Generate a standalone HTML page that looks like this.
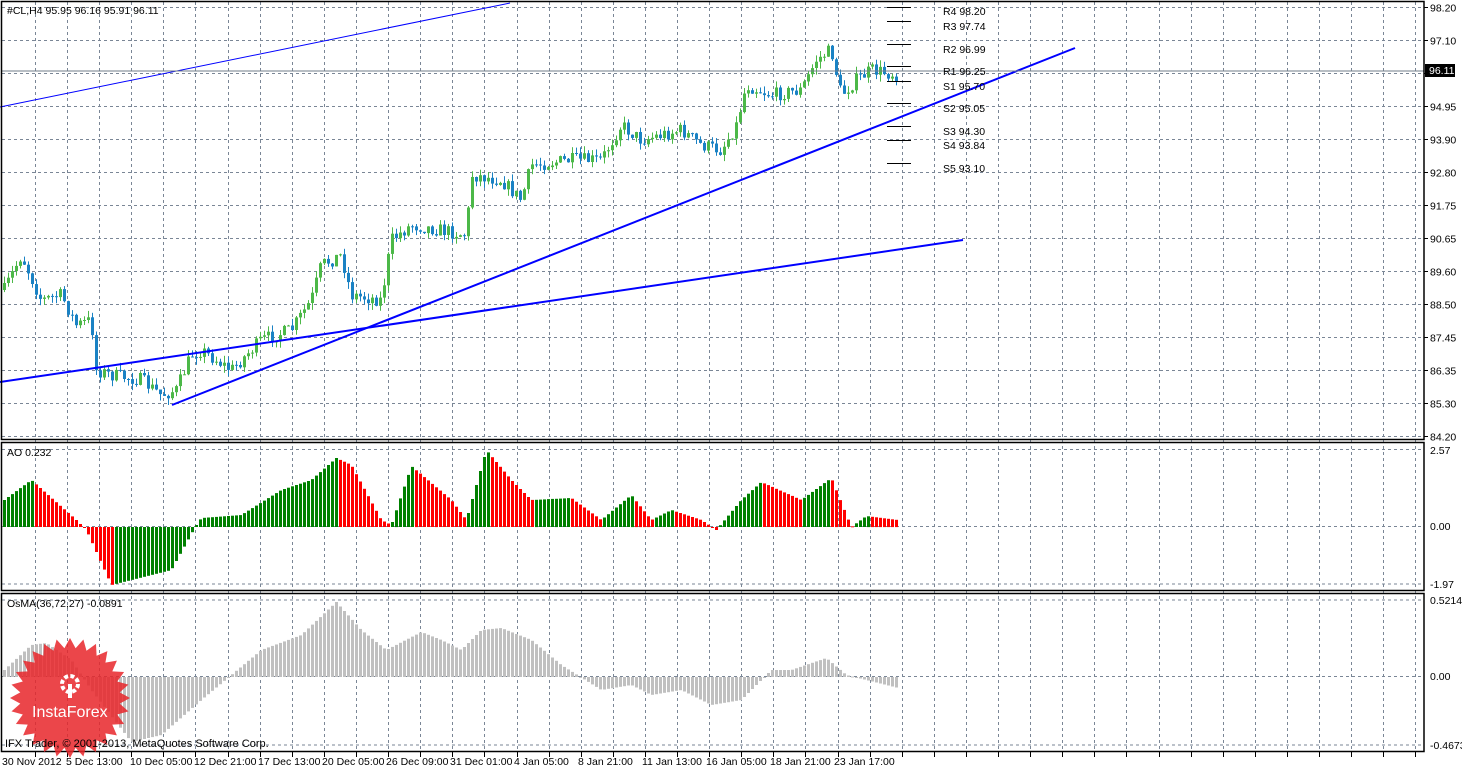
<!DOCTYPE html>
<html><head><meta charset="utf-8"><style>
html,body{margin:0;padding:0;background:#fff;}
svg{display:block;font-family:"Liberation Sans",sans-serif;font-size:10.5px;}
</style></head><body>
<svg id="s" width="1462" height="769" xmlns="http://www.w3.org/2000/svg">
<rect width="1462" height="769" fill="#fff"/>
<g id="grid"></g>
<g id="data"></g>
<line x1="0" y1="107" x2="510" y2="3" stroke="#0000ff" stroke-width="1"/>
<line x1="172" y1="405" x2="1075" y2="48" stroke="#0000ff" stroke-width="2"/>
<line x1="0" y1="382" x2="963" y2="240" stroke="#0000ff" stroke-width="2"/>
<line x1="2" y1="71" x2="1424" y2="71" stroke="#707c88" stroke-width="1"/>
<g stroke="#000" stroke-width="1">
<line x1="887" y1="7.5" x2="911" y2="7.5"/><line x1="887" y1="21.5" x2="911" y2="21.5"/>
<line x1="887" y1="44.5" x2="911" y2="44.5"/><line x1="887" y1="66.5" x2="911" y2="66.5"/>
<line x1="887" y1="81.5" x2="911" y2="81.5"/><line x1="887" y1="103.5" x2="911" y2="103.5"/>
<line x1="887" y1="126.5" x2="911" y2="126.5"/><line x1="887" y1="140.5" x2="911" y2="140.5"/>
<line x1="887" y1="163.5" x2="911" y2="163.5"/>
</g>
<g fill="#000">
<text x="943" y="15">R4 98.20</text><text x="943" y="30">R3 97.74</text>
<text x="943" y="53">R2 96.99</text><text x="943" y="75">R1 96.25</text>
<text x="943" y="90">S1 95.70</text><text x="943" y="112">S2 95.05</text>
<text x="943" y="135">S3 94.30</text><text x="943" y="149">S4 93.84</text>
<text x="943" y="172">S5 93.10</text>
<text x="7" y="14">#CL,H4  95.95 96.16 95.91 96.11</text>
<text x="7" y="456">AO 0.232</text>
<text x="7" y="607">OsMA(36,72,27) -0.0891</text>
</g>
<g fill="none" stroke="#000" stroke-width="1.5">
<rect x="1.5" y="1.5" width="1422.5" height="438"/>
<rect x="1.5" y="442.5" width="1422.5" height="148"/>
<rect x="1.5" y="593.5" width="1422.5" height="158"/>
</g>
<g id="axis" fill="#000"></g>
<rect x="1425" y="64" width="30" height="13" fill="#000"/>
<text x="1429" y="74" fill="#fff">96.11</text>
<g opacity="0.85">
<polygon id="star" fill="#e8262a"/>
</g>
<g fill="#fff" stroke="none">
<circle cx="70" cy="684" r="8" fill="none" stroke="#fff" stroke-width="4" stroke-dasharray="4 2.3"/>
<rect x="68" y="684" width="4" height="14"/>
<text x="32" y="717" font-size="16" fill="#fff">InstaForex</text>
</g>
<text x="5" y="747" fill="#000" font-size="11">IFX Trader, © 2001-2013, MetaQuotes Software Corp.</text>
</svg>
<script>
(function(){
var NS="http://www.w3.org/2000/svg",g=document.getElementById('grid'),d=document.getElementById('data'),ax=document.getElementById('axis');
function el(p,t,a){var e=document.createElementNS(NS,t);for(var k in a)e.setAttribute(k,String(a[k]));p.appendChild(e);return e;}
var gs={stroke:"#7a8696","stroke-width":1,"stroke-dasharray":"3 3"};
for(var x=35;x<1420;x+=32.1){var xx=Math.round(x)+.5;
 el(g,'line',Object.assign({x1:xx,y1:2,x2:xx,y2:752},gs));
 el(ax,'line',{x1:xx,y1:752,x2:xx,y2:757,stroke:"#000"});}
var pl=["98.20","97.10","96.05","94.95","93.90","92.80","91.75","90.65","89.60","88.50","87.45","86.35","85.30","84.20"];
for(var i=0;i<14;i++){var y=Math.round(7+i*33)+.5;el(g,'line',Object.assign({x1:2,y1:y,x2:1424,y2:y},gs));
 el(ax,'line',{x1:1424,y1:y,x2:1428,y2:y,stroke:"#000"});
 if(i!=2){var t=el(ax,'text',{x:1430,y:y+4});t.textContent=pl[i];}}
[[526.5,"0.00",530],[449.5,"2.57",454],[584,"-1.97",588],[676.5,"0.00",680],[600,"0.5214",604],[745,"-0.4673",749]].forEach(function(a){
 el(g,'line',Object.assign({x1:2,y1:a[0],x2:1424,y2:a[0]},gs));var t=el(ax,'text',{x:1430,y:a[2]});t.textContent=a[1];});
var tl=["30 Nov 2012","5 Dec 13:00","10 Dec 05:00","12 Dec 21:00","17 Dec 13:00","20 Dec 05:00","26 Dec 09:00","31 Dec 01:00","4 Jan 05:00","8 Jan 21:00","11 Jan 13:00","16 Jan 05:00","18 Jan 21:00","23 Jan 17:00"];
tl.forEach(function(s,i){var t=el(ax,'text',{x:i==0?2:(66+(i-1)*64),y:765});t.textContent=s;});
function interp(k,x){for(var i=1;i<k.length;i++)if(x<=k[i][0]){var a=k[i-1],b=k[i];return a[1]+(b[1]-a[1])*(x-a[0])/(b[0]-a[0]);}return k[k.length-1][1];}
var seed=7;function rnd(){seed=(seed*16807)%2147483647;return seed/2147483647;}
var pk=[[3,290],[20,255],[40,300],[60,295],[75,325],[90,320],[95,370],[110,375],[140,380],[160,395],[175,390],[190,355],[200,350],[230,370],[260,340],[290,330],[310,300],[320,265],[340,255],[350,295],[380,300],[390,240],[410,225],[440,230],[465,235],[470,175],[500,180],[520,200],[530,165],[570,160],[600,160],[620,125],[640,140],[660,135],[680,130],[700,145],[720,150],[735,125],[745,85],[770,95],[800,90],[815,60],[830,50],[840,95],[855,80],[870,70],[897,75]];
var prev=interp(pk,3);
for(var x=3;x<=897;x+=4){var c=interp(pk,x)+(rnd()-.5)*14,o=prev;prev=c;
 var up=c<o,col=up?"#4cb848":"#1a82c4",tp=Math.min(o,c),bt=Math.max(o,c);
 var h1=rnd()*7,h2=rnd()*7;
 el(d,'rect',{x:x+1,y:(tp-h1).toFixed(1),width:1,height:(bt-tp+h1+h2).toFixed(1),fill:col});
 el(d,'rect',{x:x,y:tp.toFixed(1),width:3,height:Math.max(1,bt-tp).toFixed(1),fill:col});}
var ak=[[3,500],[30,480],[75,520],[85,530],[110,585],[150,575],[170,570],[195,525],[200,518],[240,515],[280,490],[310,480],[335,458],[350,465],[380,520],[390,525],[410,466],[450,500],[465,520],[485,450],[510,480],[530,500],[570,498],[600,520],[630,495],[650,520],[670,510],[700,520],[715,530],[740,500],[760,482],[800,500],[830,478],[850,527],[865,516],[897,520]];
var pv=null;
for(var x=3;x<=897;x+=4){var v=527-interp(ak,x);var col=(pv===null||v>=pv)?"#008000":"#ff0000";pv=v;
 el(d,'rect',{x:x,y:Math.min(527,527-v).toFixed(1),width:3,height:Math.max(1,Math.abs(v)).toFixed(1),fill:col});}
var ok=[[3,670],[30,645],[45,643],[70,660],[90,690],[130,742],[160,735],[200,700],[230,675],[260,650],[300,635],[335,602],[360,630],[385,650],[420,632],[440,640],[460,650],[480,630],[500,628],[530,640],[560,665],[600,690],[630,685],[650,695],[680,690],[710,705],[740,700],[770,670],[790,670],[825,658],[845,675],[897,688]];
for(var x=3;x<=897;x+=4){var v=677-interp(ok,x);
 el(d,'rect',{x:x,y:Math.min(677,677-v).toFixed(1),width:3,height:Math.max(1,Math.abs(v)).toFixed(1),fill:"#c0c0c0"});}
var pts=[],n=28,cx=70,cy=698;
for(var i=0;i<2*n;i++){var r=i%2?50:60,a=Math.PI*i/n;pts.push((cx+r*Math.cos(a)).toFixed(1)+","+(cy+r*Math.sin(a)).toFixed(1));}
document.getElementById('star').setAttribute('points',pts.join(' '));
})();
</script>
</body></html>
